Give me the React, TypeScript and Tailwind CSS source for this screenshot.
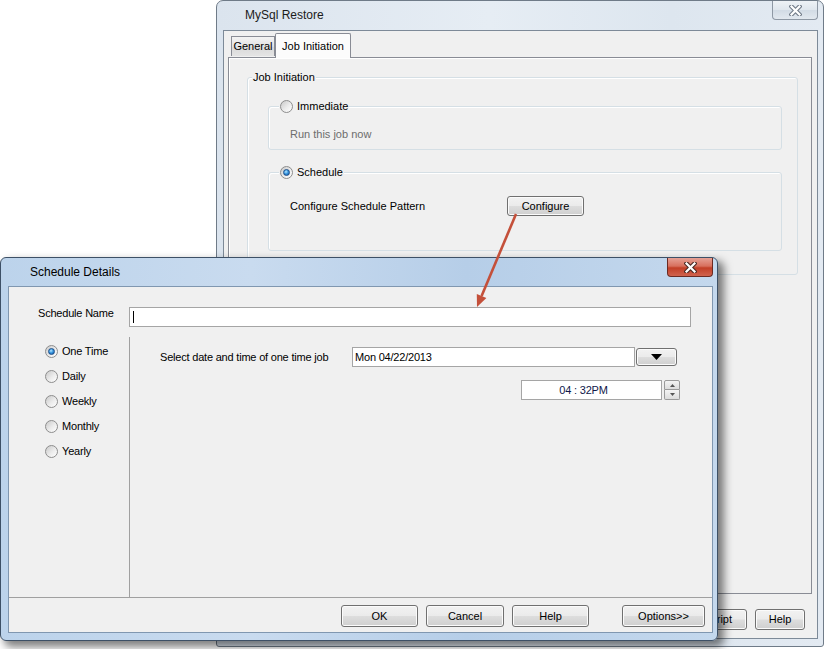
import clsx from "clsx";
import type { ReactNode } from "react";

// shared look of the classic Windows 7 push button
function WinButton({
  children,
  className,
}: {
  children: ReactNode;
  className?: string;
}) {
  return (
    <button
      type="button"
      className={clsx(
        "flex shrink-0 items-center justify-center rounded-[3px] border border-[#707070] bg-[linear-gradient(#f2f2f2_0%,#ebebeb_48%,#dddddd_52%,#cfcfcf_100%)] text-[11px] leading-none text-black shadow-[inset_0_0_0_1px_#fbfbfb]",
        className
      )}
    >
      {children}
    </button>
  );
}

function Radio({ checked }: { checked?: boolean }) {
  return (
    <span className="flex h-[13px] w-[13px] shrink-0 items-center justify-center rounded-full border border-[#8d8d8d] bg-[linear-gradient(135deg,#c9c9c9,#ececec_55%,#ffffff)]">
      {checked && (
        <span className="h-[7px] w-[7px] rounded-full border border-[#1d4f8a] bg-[radial-gradient(circle_at_40%_35%,#b5e6ff_0%,#3a98e0_45%,#0e4f9a_100%)]" />
      )}
    </span>
  );
}

function CloseGlyph({ active }: { active?: boolean }) {
  return (
    <svg width="13" height="11" viewBox="0 0 13 11">
      <path
        d="M2.5 1.5 L10.5 9.5 M10.5 1.5 L2.5 9.5"
        stroke={active ? "#4a2a24" : "#717b88"}
        strokeWidth="4.4"
        strokeLinecap="square"
        fill="none"
      />
      <path
        d="M2.5 1.5 L10.5 9.5 M10.5 1.5 L2.5 9.5"
        stroke="#ffffff"
        strokeWidth="2.2"
        strokeLinecap="square"
        fill="none"
      />
    </svg>
  );
}

function GroupBox({
  legend,
  className,
  legendClass,
  children,
}: {
  legend: ReactNode;
  className?: string;
  legendClass?: string;
  children: ReactNode;
}) {
  return (
    <fieldset
      className={clsx(
        "rounded-[3px] border border-[#d5dfe5] shadow-[inset_1px_1px_0_#ffffff]",
        className
      )}
    >
      <legend
        className={clsx(
          "bg-[#f0f0f0] px-[1px] text-[11px] leading-[14px]",
          legendClass
        )}
      >
        {legend}
      </legend>
      {children}
    </fieldset>
  );
}

function MySqlRestoreWindow() {
  return (
    <div className="absolute left-[216px] top-0 flex h-[647px] w-[608px] flex-col rounded-t-[7px] rounded-b-[3px] border border-[#6f7b88] bg-[linear-gradient(to_right,#dbe4ee,#e6edf4_45%,#dde6ef_75%,#e3eaf2)] pl-[6px] pr-[5px] pb-[7px]">
      {/* title bar */}
      <div className="flex h-[29px] shrink-0 items-start justify-between">
        <span className="pl-[22px] pt-[7px] text-[12px] leading-[15px] text-[#1b1b1b]">
          MySql Restore
        </span>
        <div className="flex h-[19px] w-[46px] items-center justify-center rounded-b-[4px] border border-t-0 border-[#8e98a4] bg-[linear-gradient(#eef2f6,#dfe6ed_50%,#d2dbe5_52%,#e2e8ef)]">
          <CloseGlyph />
        </div>
      </div>

      {/* client area */}
      <div className="flex flex-1 flex-col border border-[#7d8a98] bg-[#f0f0f0] pl-[4px] pr-[5px] pt-[2px]">
        {/* tabs */}
        <div className="relative z-10 flex h-[24px] items-end pl-[3px]">
          <div className="mb-[1px] flex h-[20px] w-[44px] items-center justify-center border border-b-0 border-[#898c95] bg-[linear-gradient(#f3f3f3,#e3e3e3_50%,#d9d9d9_52%,#e4e4e4)] text-[11px]">
            General
          </div>
          <div className="-mb-[1px] flex h-[25px] w-[76px] items-start justify-center rounded-t-[2px] border border-b-0 border-[#898c95] bg-[#fcfcfc] pt-[4px] text-[11px]">
            Job Initiation
          </div>
        </div>

        {/* tab page */}
        <div className="h-[537px] border border-[#898c95] bg-[#f0f0f0] pl-[18px] pr-[13px] pt-[12px] shadow-[inset_1px_1px_0_#ffffff]">
          <GroupBox legend="Job Initiation" legendClass="ml-[4px]" className="pb-[23px]">
            <div className="pl-[20px] pr-[15px]">
              <GroupBox
                className="mt-[15px] pb-[8px]"
                legendClass="ml-[10px]"
                legend={
                  <span className="flex items-center gap-[4px]">
                    <Radio />
                    Immediate
                  </span>
                }
              >
                <div className="pl-[21px] pt-[15px] text-[11px] leading-[13px] text-[#6d6d6d]">
                  Run this job now
                </div>
              </GroupBox>

              <GroupBox
                className="mt-[15px] pb-[34px]"
                legendClass="ml-[10px]"
                legend={
                  <span className="flex items-center gap-[4px]">
                    <Radio checked />
                    Schedule
                  </span>
                }
              >
                <div className="flex items-center pl-[21px] pt-[17px]">
                  <span className="w-[217px] text-[11px] leading-[13px]">
                    Configure Schedule Pattern
                  </span>
                  <WinButton className="h-[20px] w-[77px]">Configure</WinButton>
                </div>
              </GroupBox>
            </div>
          </GroupBox>
        </div>

        {/* dialog buttons */}
        <div className="flex justify-end gap-[8px] pr-[7px] pt-[15px]">
          <WinButton className="h-[21px] w-[99px] justify-end pr-[14px]">Script</WinButton>
          <WinButton className="h-[21px] w-[50px]">Help</WinButton>
        </div>
      </div>
    </div>
  );
}

function ScheduleDetailsWindow() {
  const options = ["One Time", "Daily", "Weekly", "Monthly", "Yearly"];

  return (
    <div className="absolute left-0 top-[257px] flex h-[384px] w-[718px] flex-col rounded-[6px] border border-[#3d5066] bg-[linear-gradient(to_right,#bcd3eb,#c9dbef_35%,#b6cee8_65%,#c4d8ed)] pl-[7px] pr-[4px] pb-[7px] shadow-[5px_5px_9px_1px_rgba(0,0,0,0.5)]">
      {/* title bar */}
      <div className="flex h-[28px] shrink-0 items-start justify-between">
        <span className="pl-[22px] pt-[7px] text-[12px] leading-[15px] text-black">
          Schedule Details
        </span>
        <div className="flex h-[19px] w-[46px] items-center justify-center rounded-b-[4px] border border-t-0 border-[#6b2a22] bg-[linear-gradient(#e6a195,#d8705e_45%,#c23f27_55%,#d0634e)]">
          <CloseGlyph active />
        </div>
      </div>

      {/* client area */}
      <div className="flex flex-1 flex-col border border-[#8097b0] bg-[#f0f0f0] text-[11px] leading-[13px] tracking-[-0.2px] text-black">
        {/* name row */}
        <div className="flex h-[50px] shrink-0 items-start pt-[20px]">
          <span className="w-[120px] pl-[29px]">Schedule Name</span>
          <div className="flex h-[20px] w-[562px] items-center border border-[#a5a5a5] bg-white pl-[3px]">
            <span className="h-[12px] w-[1px] bg-black" />
          </div>
        </div>

        {/* body */}
        <div className="flex h-[261px] shrink-0 border-b border-[#a0a0a0]">
          <div className="flex w-[121px] shrink-0 flex-col gap-[12px] border-r border-[#a0a0a0] pl-[36px] pt-[8px]">
            {options.map((o, i) => (
              <div key={o} className="flex items-center gap-[4px]">
                <Radio checked={i === 0} />
                <span>{o}</span>
              </div>
            ))}
          </div>

          <div className="flex flex-1 flex-col pt-[10px]">
            <div className="flex items-center pl-[30px]">
              <span className="w-[192px]">Select date and time of one time job</span>
              <div className="flex h-[20px] w-[283px] items-center border border-[#a5a5a5] bg-white pl-[2px]">
                Mon 04/22/2013
              </div>
              <WinButton className="ml-[1px] h-[18px] w-[41px]">
                <svg width="11" height="6" viewBox="0 0 11 6">
                  <path d="M0 0 H11 L5.5 6 Z" fill="#000" />
                </svg>
              </WinButton>
            </div>

            <div className="mt-[13px] flex items-center pl-[391px]">
              <div className="flex h-[20px] w-[141px] items-center justify-center border border-[#a5a5a5] bg-white pr-[16px] text-[#10184a]">
                04 : 32PM
              </div>
              <div className="ml-[2px] flex h-[20px] w-[16px] flex-col">
                <div className="flex h-[10px] items-center justify-center rounded-t-[2px] border border-[#9a9a9a] bg-[linear-gradient(#f4f4f4,#dcdcdc)]">
                  <svg width="5" height="3" viewBox="0 0 5 3">
                    <path d="M0 3 L2.5 0 L5 3 Z" fill="#555" />
                  </svg>
                </div>
                <div className="flex h-[10px] items-center justify-center rounded-b-[2px] border border-t-0 border-[#9a9a9a] bg-[linear-gradient(#f4f4f4,#dcdcdc)]">
                  <svg width="5" height="3" viewBox="0 0 5 3">
                    <path d="M0 0 H5 L2.5 3 Z" fill="#555" />
                  </svg>
                </div>
              </div>
            </div>
          </div>
        </div>

        {/* button bar */}
        <div className="flex flex-1 items-start justify-end pr-[7px] pt-[7px] tracking-normal">
          <WinButton className="h-[22px] w-[77px]">OK</WinButton>
          <WinButton className="ml-[8px] h-[22px] w-[78px]">Cancel</WinButton>
          <WinButton className="ml-[8px] h-[22px] w-[77px]">Help</WinButton>
          <WinButton className="ml-[33px] h-[22px] w-[83px]">Options&gt;&gt;</WinButton>
        </div>
      </div>
    </div>
  );
}

export default function App() {
  return (
    <div className="relative h-[649px] w-[825px] overflow-hidden bg-white font-['Liberation_Sans',Arial,sans-serif]">
      <MySqlRestoreWindow />
      <ScheduleDetailsWindow />

      {/* callout arrow from Configure to the new dialog */}
      <svg
        className="pointer-events-none absolute left-0 top-0"
        width="825"
        height="649"
        viewBox="0 0 825 649"
      >
        <line x1="516" y1="214" x2="481.6" y2="296" stroke="#c4503a" strokeWidth="2.6" />
        <path d="M477 307 L486.4 297.9 L476.8 293.9 Z" fill="#c4503a" />
      </svg>
    </div>
  );
}
